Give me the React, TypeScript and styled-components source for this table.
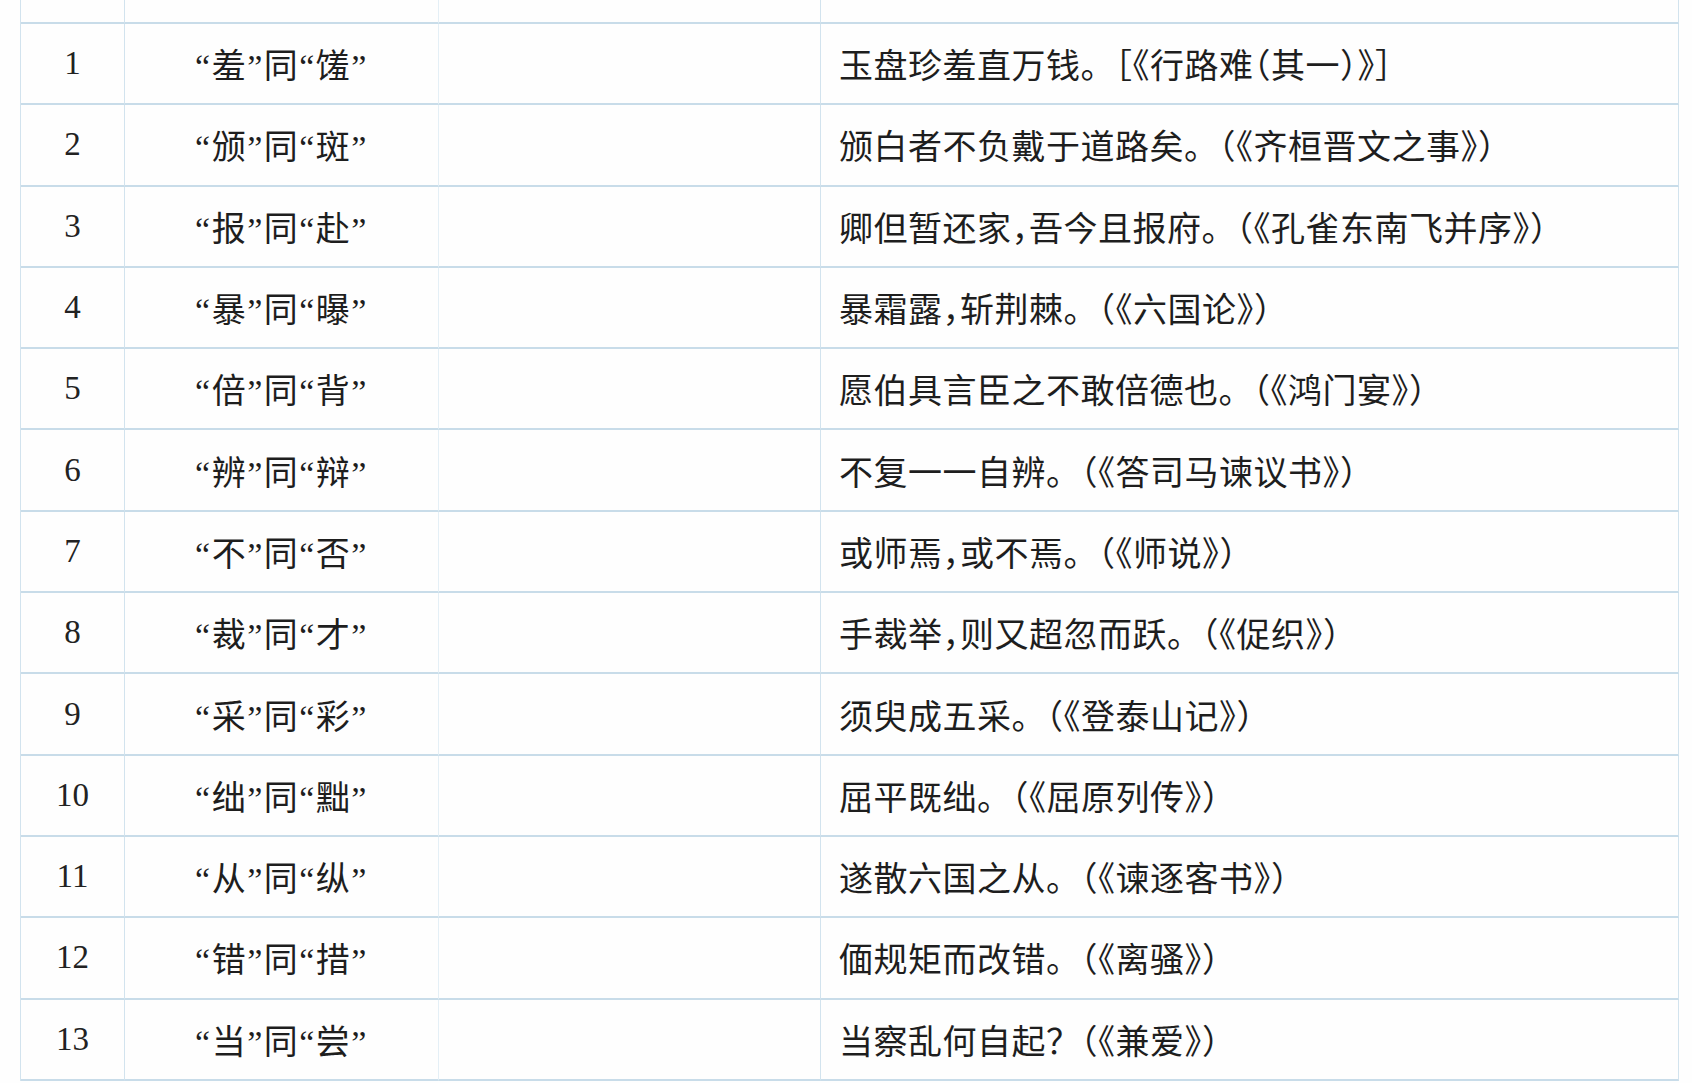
import React from "react";
import styled, { createGlobalStyle } from "styled-components";

const GlobalStyle = createGlobalStyle`
  html, body {
    margin: 0;
    padding: 0;
    background: #fefefe;
  }
  body {
    font-family: "Liberation Serif", "Noto Sans CJK SC", serif;
    color: #1e1e1e;
    overflow: hidden;
  }
`;

const Page = styled.div`
  width: 1692px;
  height: 1083px;
  box-sizing: border-box;
  padding: 0 14px 0 20px;
  overflow: hidden;
  background: #fefefe;
`;

const Table = styled.div`
  display: grid;
  grid-template-columns: 104px 314px 382px 858px;
  border-left: 1.5px solid #d2e3ee;
`;

const Cell = styled.div<{ $faint?: boolean; $head?: boolean; $align?: "center" | "left" }>`
  box-sizing: border-box;
  height: ${(p) => (p.$head ? "24px" : "81.3px")};
  display: flex;
  align-items: center;
  justify-content: ${(p) => (p.$align === "left" ? "flex-start" : "center")};
  padding-left: ${(p) => (p.$align === "left" ? "18px" : "0")};
  border-right: 1.5px solid ${(p) => (p.$faint ? "#e4eff6" : "#d2e3ee")};
  border-bottom: 2px solid #c8dce9;
  white-space: nowrap;
`;

const Num = styled.span`
  font-family: "Liberation Serif", serif;
  font-size: 33px;
  color: #222;
`;

const Pair = styled.span`
  font-family: "Liberation Serif", "Noto Sans CJK SC", serif;
  font-size: 34px;
  letter-spacing: 1.5px;
  color: #1e1e1e;
`;

const Example = styled.span`
  font-family: "Noto Sans CJK SC", sans-serif;
  font-size: 34px;
  color: #1e1e1e;
  letter-spacing: 0.5px;
`;

const Half = styled.span`
  font-feature-settings: "halt";
`;

const rows: [string, string, string][] = [
  ["1", "“羞”同“馐”", "玉盘珍羞直万钱。［《行路难^（其一^）》］"],
  ["2", "“颁”同“斑”", "颁白者不负戴于道路矣。（《齐桓晋文之事》）"],
  ["3", "“报”同“赴”", "卿但暂还家^，吾今且报府。（《孔雀东南飞并序》）"],
  ["4", "“暴”同“曝”", "暴霜露^，斩荆棘。（《六国论》）"],
  ["5", "“倍”同“背”", "愿伯具言臣之不敢倍德也。（《鸿门宴》）"],
  ["6", "“辨”同“辩”", "不复一一自辨。（《答司马谏议书》）"],
  ["7", "“不”同“否”", "或师焉^，或不焉。（《师说》）"],
  ["8", "“裁”同“才”", "手裁举^，则又超忽而跃。（《促织》）"],
  ["9", "“采”同“彩”", "须臾成五采。（《登泰山记》）"],
  ["10", "“绌”同“黜”", "屈平既绌。（《屈原列传》）"],
  ["11", "“从”同“纵”", "遂散六国之从。（《谏逐客书》）"],
  ["12", "“错”同“措”", "偭规矩而改错。（《离骚》）"],
  ["13", "“当”同“尝”", "当察乱何自起^？（《兼爱》）"],
];

function renderText(text: string) {
  const parts = text.split("^");
  return parts.map((part, i) => {
    if (i === 0) return <React.Fragment key={i}>{part}</React.Fragment>;
    return (
      <React.Fragment key={i}>
        <Half>{part.charAt(0)}</Half>
        {part.slice(1)}
      </React.Fragment>
    );
  });
}

export default function App() {
  return (
    <>
      <GlobalStyle />
      <Page>
        <Table>
          <Cell $head />
          <Cell $head $faint />
          <Cell $head />
          <Cell $head />
          {rows.map(([n, pair, ex]) => (
            <React.Fragment key={n}>
              <Cell>
                <Num>{n}</Num>
              </Cell>
              <Cell $faint>
                <Pair>{pair}</Pair>
              </Cell>
              <Cell />
              <Cell $align="left">
                <Example>{renderText(ex)}</Example>
              </Cell>
            </React.Fragment>
          ))}
        </Table>
      </Page>
    </>
  );
}
